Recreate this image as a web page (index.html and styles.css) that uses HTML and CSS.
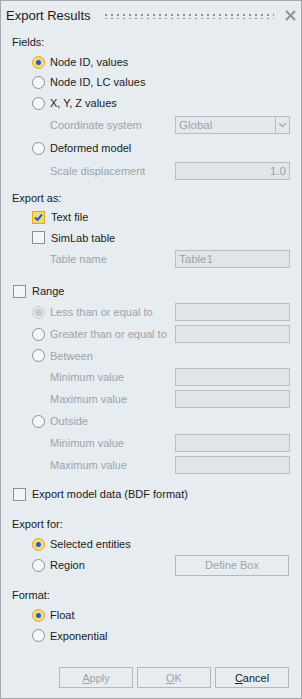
FILE: index.html
```html
<!DOCTYPE html>
<html lang="en">
<head>
    <meta charset="UTF-8">
    <title>Export Results</title>
    <link rel="stylesheet" href="styles.css">
</head>
<body>
	<div class="panel">
		<div class="titlebar">
			<span class="title">Export Results</span>
			<span class="grip"></span>
			<span class="close">
				<svg width="11" height="11" viewBox="0 0 11 11"><path d="M1 1L10 10M10 1L1 10" stroke="#8d9297" stroke-width="2"/></svg>
			</span>
		</div>

		<div class="content">
			<!-- Fields -->
			<div class="heading h-fields">Fields:</div>
			<div class="row r20"><span class="radio on"></span><span class="lbl">Node ID, values</span></div>
			<div class="row r20"><span class="radio"></span><span class="lbl">Node ID, LC values</span></div>
			<div class="row r22"><span class="radio"></span><span class="lbl">X, Y, Z values</span></div>
			<div class="row r22 sub">
				<span class="lbl off">Coordinate system</span>
				<span class="combo"><span class="combo-text">Global</span><span class="combo-btn"><svg width="9" height="6" viewBox="0 0 9 6"><path d="M1 1L4.5 4.5L8 1" stroke="#a9aeb3" stroke-width="1.3" fill="none"/></svg></span></span>
			</div>
			<div class="row r24"><span class="radio"></span><span class="lbl">Deformed model</span></div>
			<div class="row r22 sub">
				<span class="lbl off">Scale displacement</span>
				<span class="field right">1.0</span>
			</div>

			<!-- Export as -->
			<div class="heading h-as">Export as:</div>
			<div class="row r20"><span class="check on"><svg width="11" height="11" viewBox="0 0 11 11"><path d="M2 5.5L4.5 8L9 2.5" stroke="#1f5fc8" stroke-width="2" fill="none"/></svg></span><span class="lbl">Text file</span></div>
			<div class="row r21"><span class="check"></span><span class="lbl">SimLab table</span></div>
			<div class="row r22 sub">
				<span class="lbl off">Table name</span>
				<span class="field">Table1</span>
			</div>

			<!-- Range -->
			<div class="row r20 top h-range"><span class="check"></span><span class="lbl">Range</span></div>
			<div class="row r22"><span class="radio dis"></span><span class="lbl off">Less than or equal to</span><span class="field"></span></div>
			<div class="row r22"><span class="radio"></span><span class="lbl off">Greater than or equal to</span><span class="field"></span></div>
			<div class="row r21"><span class="radio"></span><span class="lbl off">Between</span></div>
			<div class="row r22 sub"><span class="lbl off">Minimum value</span><span class="field"></span></div>
			<div class="row r22 sub"><span class="lbl off">Maximum value</span><span class="field"></span></div>
			<div class="row r22"><span class="radio"></span><span class="lbl off">Outside</span></div>
			<div class="row r22 sub"><span class="lbl off">Minimum value</span><span class="field"></span></div>
			<div class="row r21 sub"><span class="lbl off">Maximum value</span><span class="field"></span></div>

			<div class="row r20 top h-model"><span class="check"></span><span class="lbl">Export model data (BDF format)</span></div>

			<!-- Export for -->
			<div class="heading h-for">Export for:</div>
			<div class="row r20"><span class="radio on"></span><span class="lbl">Selected entities</span></div>
			<div class="row r22"><span class="radio"></span><span class="lbl">Region</span><span class="btn wide off">Define Box</span></div>

			<!-- Format -->
			<div class="heading h-format">Format:</div>
			<div class="row r20"><span class="radio on"></span><span class="lbl">Float</span></div>
			<div class="row r21"><span class="radio"></span><span class="lbl">Exponential</span></div>
		</div>

		<div class="footer">
			<span class="btn off"><u>A</u>pply</span>
			<span class="btn off"><u>O</u>K</span>
			<span class="btn"><u>C</u>ancel</span>
		</div>
	</div>
</body>
</html>
```

FILE: styles.css
```css
html, body {
	margin: 0;
	padding: 0;
}
body {
	font-family: "Liberation Sans", Arial, sans-serif;
	font-size: 11px;
	color: #1b1b1b;
	background: #e6ecf0;
}
.panel {
	display: flex;
	flex-direction: column;
	width: 302px;
	height: 699px;
	box-sizing: border-box;
	border: 1px solid #a3a9af;
	background: #e6ecf0;
}
.titlebar {
	display: flex;
	align-items: center;
	height: 29px;
	padding: 0 5px 0 5px;
}
.title {
	font-size: 13px;
	color: #1b1b1b;
}
.grip {
	flex: 1;
	height: 6px;
	margin: 0 11px 0 12px;
	background-image: radial-gradient(circle, #8f949a 1px, transparent 1.2px);
	background-size: 6px 4px;
	background-position: 0 0;
}
.close {
	display: flex;
	width: 11px;
	height: 11px;
}
.content {
	display: flex;
	flex-direction: column;
	padding: 0 11px 0 11px;
}
.heading {
	display: flex;
	align-items: center;
	height: 20px;
}
.h-fields { margin-top: 2px; }
.h-as { margin-top: 6px; height: 19px; }
.h-for { margin-top: 10px; }
.h-format { margin-top: 9px; }
.row {
	display: flex;
	align-items: center;
	padding-left: 20px;
}
.row.top { padding-left: 1px; }
.h-range { margin-top: 11px; }
.h-model { margin-top: 9px; }
.row.sub { padding-left: 38px; }
.r20 { height: 20px; }
.r21 { height: 21px; }
.r22 { height: 22px; }
.r24 { height: 24px; }
.lbl {
	flex: 1;
	white-space: nowrap;
}
.lbl.off { color: #9da3a9; }
.radio {
	width: 11px;
	height: 11px;
	margin-right: 5px;
	border: 1px solid #8b9096;
	border-radius: 50%;
	background: #f5f7f8;
	position: relative;
}
.radio.on {
	border-color: #e2a623;
	background: #f7d979;
}
.radio.on::after {
	content: "";
	position: absolute;
	left: 3px;
	top: 3px;
	width: 5px;
	height: 5px;
	border-radius: 50%;
	background: #1c5ccc;
}
.radio.dis {
	border-color: #c5cacf;
	background: #e3e8eb;
}
.radio.dis::after {
	content: "";
	position: absolute;
	left: 2px;
	top: 2px;
	width: 7px;
	height: 7px;
	border-radius: 50%;
	background: #c4c9ce;
}
.check {
	display: flex;
	align-items: center;
	justify-content: center;
	width: 11px;
	height: 11px;
	margin-right: 6px;
	border: 1px solid #8b9096;
	background: #f3f5f7;
}
.check.on {
	border-color: #e2a623;
	background: #f8d979;
}
.field {
	height: 16px;
	line-height: 16px;
	padding: 0 3px;
	box-sizing: content-box;
	width: 107px;
	border: 1px solid #b8bdc2;
	background: #dfe5e9;
	color: #9da3a9;
	font-size: 11.5px;
}
.field.right { text-align: right; }
.combo {
	display: flex;
	width: 115px;
	height: 18px;
	box-sizing: border-box;
}
.combo-text {
	flex: 1;
	line-height: 16px;
	padding: 0 3px;
	border: 1px solid #b8bdc2;
	background: #e2e8ec;
	color: #9da3a9;
	font-size: 11.5px;
}
.combo-btn {
	display: flex;
	align-items: center;
	justify-content: center;
	width: 13px;
	border: 1px solid #b8bdc2;
	border-left: none;
	background: #e2e8ec;
}
.btn {
	display: flex;
	align-items: center;
	justify-content: center;
	width: 72px;
	height: 19px;
	border: 1px solid #b3b8bd;
	background: #e6ecf0;
	color: #1b1b1b;
}
.btn.off { color: #9da3a9; }
.btn.wide {
	width: 112px;
	margin-right: 1px;
}
.btn u { text-decoration: underline; }
.footer {
	display: flex;
	justify-content: flex-end;
	gap: 4px;
	margin-top: auto;
	padding: 0 12px 10px 0;
}
```
